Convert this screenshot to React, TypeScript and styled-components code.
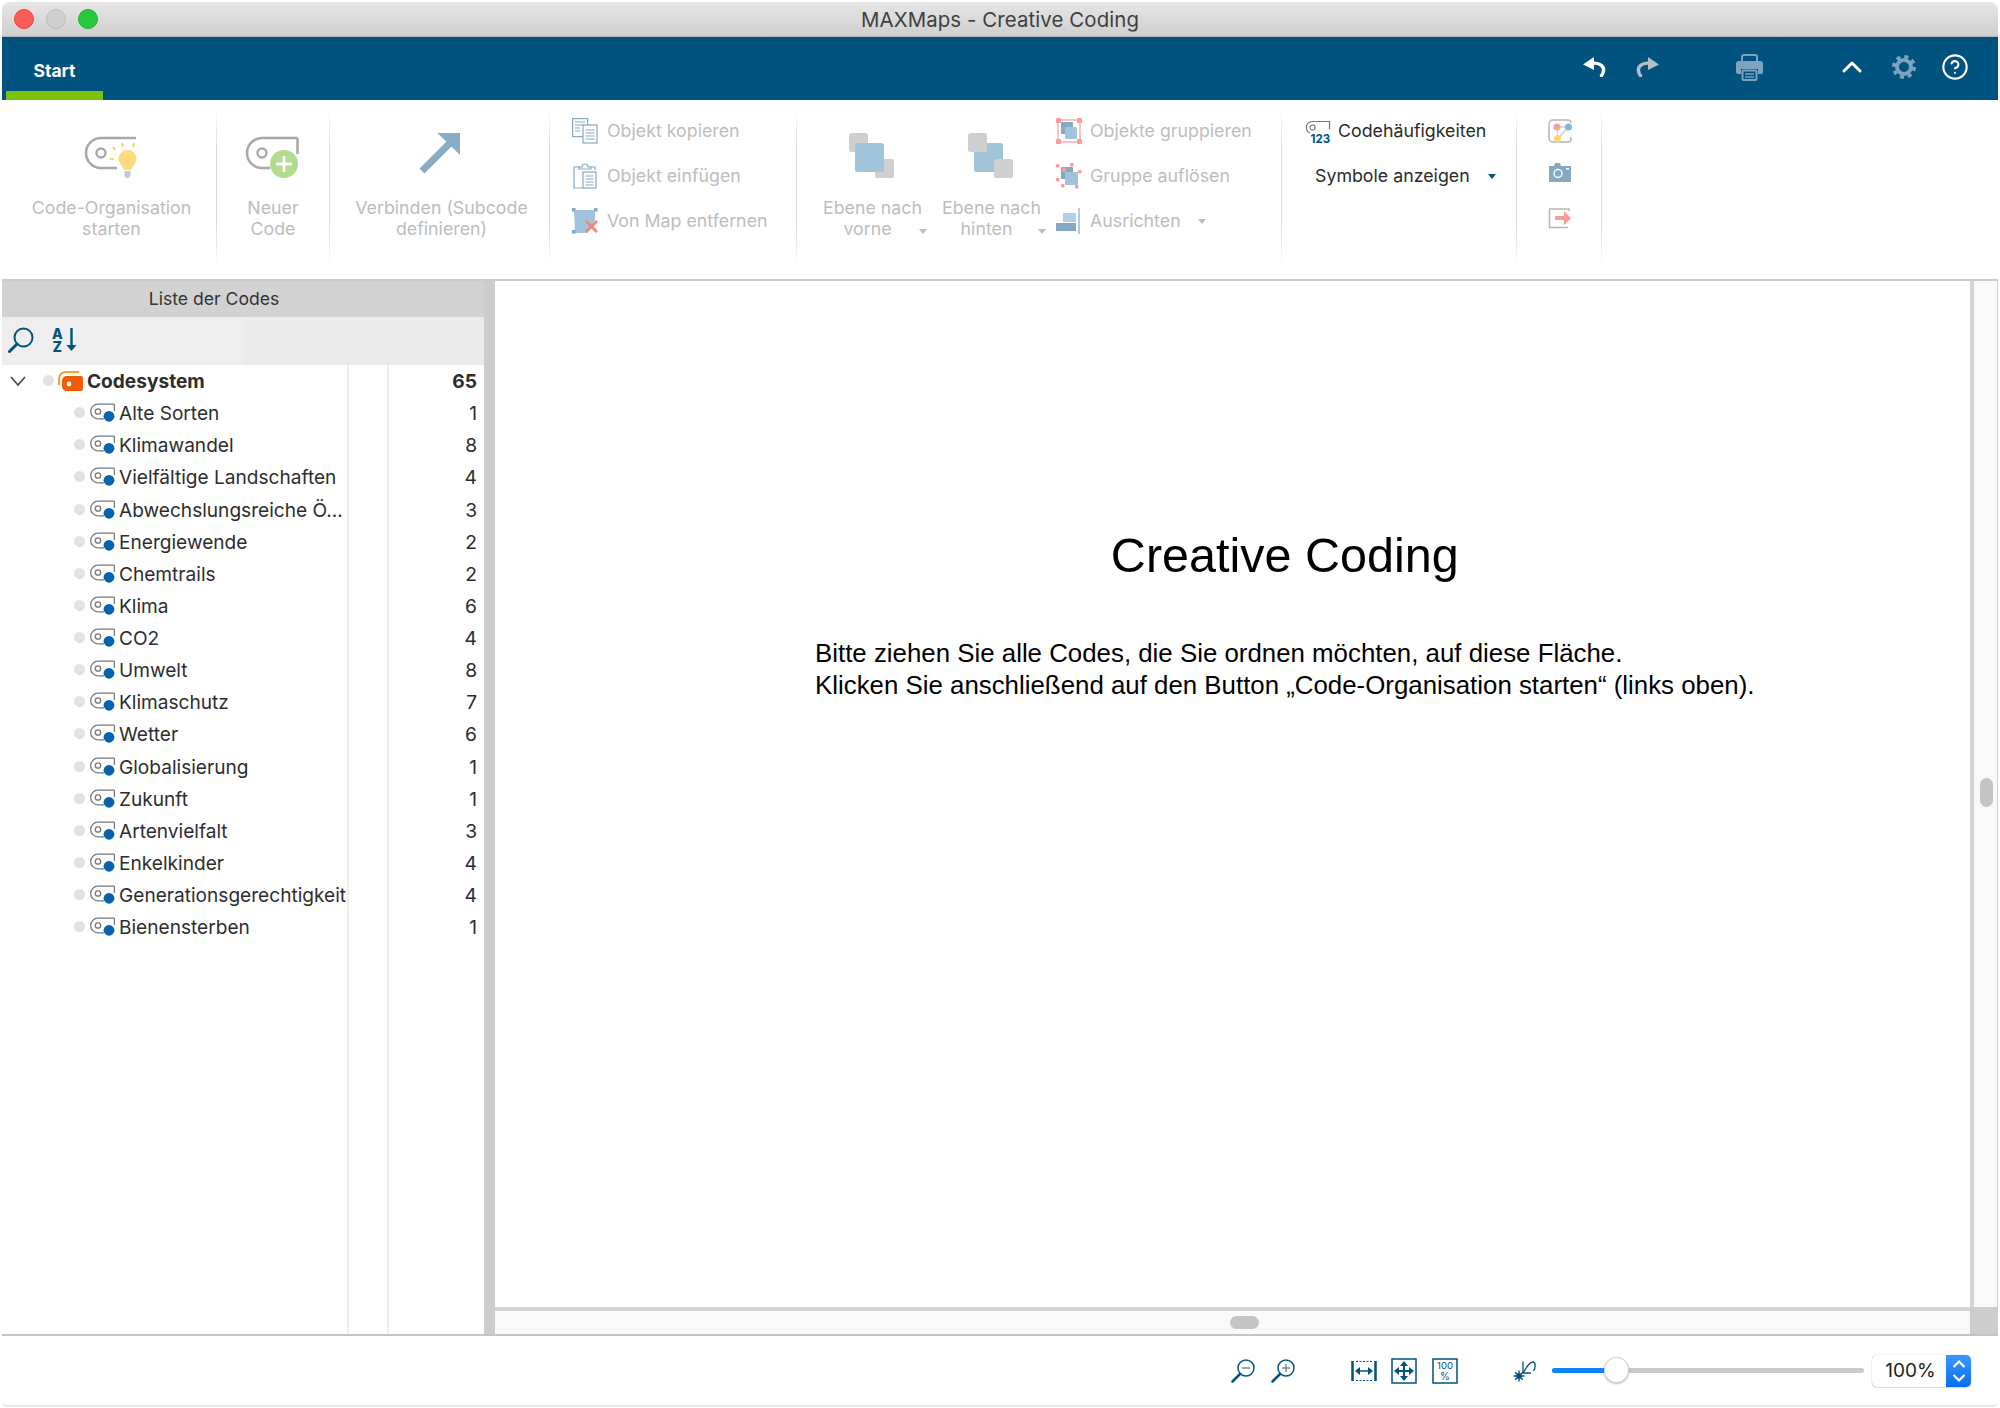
import React from 'react';
import styled, { createGlobalStyle } from 'styled-components';
import { CircleHelp, ChevronUp } from 'lucide-react';

const UI = `Inter, "Liberation Sans", sans-serif`;
const NAVY = '#01537f';

const Global = createGlobalStyle`
  html, body { margin: 0; padding: 0; background: #fff; }
  * { box-sizing: border-box; }
`;

const Page = styled.div`
  width: 2000px; height: 1408px; padding: 2px 2px 1px 2px; background: #fff;
  font-family: ${UI}; overflow: hidden;
`;
const Win = styled.div`
  height: 100%; display: flex; flex-direction: column; background: #fff;
  border-bottom: 2px solid #e6e6e6; border-radius: 8px 8px 6px 6px; overflow: hidden;
`;
const TitleBar = styled.div`
  height: 35px; flex: none; display: flex; align-items: center; justify-content: center; position: relative;
  background: linear-gradient(#e6e6e6, #cfcfcf); border-bottom: 1px solid #b4b4b4;
  font-size: 20.4px; color: #3f3f3f; letter-spacing: 0.1px;
`;
const Lights = styled.div`
  position: absolute; left: 12px; top: 7px; display: flex; gap: 12px;
`;
const Light = styled.span<{ $c: string; $b: string }>`
  width: 20px; height: 20px; border-radius: 50%; background: ${p => p.$c}; border: 1px solid ${p => p.$b};
`;
const Header = styled.div`
  height: 63px; flex: none; background: ${NAVY}; display: flex; align-items: stretch; padding-left: 4px; position: relative;
`;
const Tab = styled.div`
  width: 97px; display: flex; align-items: center; justify-content: center; padding-top: 12px;
  border-bottom: 9px solid #7cc207; color: #fff; font-weight: 700; font-size: 17.5px;
`;
const HeaderTools = styled.div`
  margin-left: auto; display: flex; align-items: center; padding-right: 29px; padding-bottom: 3px;
`;
const HIcon = styled.span<{ $ml: number }>`
  display: flex; margin-left: ${p => p.$ml}px;
`;

const Ribbon = styled.div`
  height: 181px; flex: none; display: flex; align-items: flex-start; padding-top: 7px;
  border-bottom: 2px solid #cbcbcb; background: #fff;
`;
const Group = styled.div<{ $w: number; $pl?: number }>`
  width: ${p => p.$w}px; height: 158px; flex: none; display: flex;
  padding-left: ${p => p.$pl ?? 0}px;
  border-right: 1px solid;
  border-image: linear-gradient(rgba(220,220,220,0), #dcdcdc 25%, #dcdcdc 75%, rgba(220,220,220,0)) 1;
`;
const Big = styled.div<{ $w?: number }>`
  ${p => (p.$w ? `width:${p.$w}px;` : 'flex:1;')}
  display: flex; flex-direction: column; align-items: center; position: relative; padding-top: 26px;
`;
const BigIcon = styled.svg`
  display: block; flex: none; margin-bottom: 8px;
`;
const BigLabel = styled.div`
  font-size: 17.8px; line-height: 21px; text-align: center; color: #bdbdbd; white-space: nowrap;
`;
const ShiftLine = styled.div`
  padding-right: 10px;
`;
const BigCaret = styled.span`
  position: absolute; left: 106px; top: 122px; width: 0; height: 0;
  border-left: 4.5px solid transparent; border-right: 4.5px solid transparent; border-top: 5px solid #bdbdbd;
`;
const List = styled.div<{ $pl: number }>`
  display: flex; flex-direction: column; padding-left: ${p => p.$pl}px; padding-top: 1px;
`;
const Item = styled.div<{ $dark?: boolean; $gap?: number }>`
  height: 45px; display: flex; align-items: center; gap: ${p => p.$gap ?? 9}px; white-space: nowrap;
  font-size: 17.8px; color: ${p => (p.$dark ? '#2b2b2b' : '#bdbdbd')};
`;
const Caret = styled.span<{ $c: string; $ml: number }>`
  width: 0; height: 0; margin-left: ${p => p.$ml}px; margin-top: 2px;
  border-left: 4.5px solid transparent; border-right: 4.5px solid transparent; border-top: 5px solid ${p => p.$c};
`;
const SymbolText = styled.span`
  margin-left: 11px;
`;
const IconCol = styled.div`
  display: flex; flex-direction: column; padding-left: 31px; padding-top: 2px;
`;
const IconRow = styled.div`
  height: 44px; display: flex; align-items: center;
`;

const Main = styled.div`
  flex: 1; min-height: 0; display: flex; border-bottom: 2px solid #c4c4c4;
`;
const Panel = styled.div`
  width: 482px; flex: none; display: flex; flex-direction: column;
`;
const PanelHead = styled.div`
  height: 36px; flex: none; background: #d2d2d2; display: flex; align-items: center; justify-content: center;
  font-size: 17.6px; color: #333; padding: 0 58px 2px 0;
`;
const PanelTools = styled.div`
  height: 48px; flex: none; background: linear-gradient(90deg, #eeeeee 0, #eeeeee 50%, #ebebeb 50%); display: flex; align-items: center; padding: 0 0 2px 6px; gap: 18px;
`;
const Columns = styled.div`
  flex: 1; display: flex; min-height: 0;
`;
const NameCol = styled.div`
  width: 347px; flex: none; border-right: 2px solid #eee;
`;
const MidCol = styled.div`
  width: 40px; flex: none; border-right: 2px solid #eee;
`;
const CountCol = styled.div`
  flex: 1; padding-right: 7px;
`;
const NameRow = styled.div<{ $root?: boolean }>`
  height: 32.125px; display: flex; align-items: center; white-space: nowrap; overflow: hidden;
  padding-left: ${p => (p.$root ? 8 : 72)}px;
  font-size: 19.1px; color: #2d2d2d; font-weight: ${p => (p.$root ? 700 : 400)};
`;
const CountRow = styled.div<{ $root?: boolean }>`
  height: 32.125px; display: flex; align-items: center; justify-content: flex-end;
  font-size: 19.2px; color: #2d2d2d; font-weight: ${p => (p.$root ? 700 : 400)};
`;
const Dot = styled.span`
  width: 11px; height: 11px; border-radius: 50%; background: #e2e2e2; flex: none; margin-bottom: 1px;
`;
const Chevron = styled.svg`
  flex: none; margin-right: 17px;
`;
const TagIcon = styled.svg`
  flex: none; margin-left: 5px; margin-right: 4px; margin-bottom: 1px;
`;
const RootIcon = styled.svg`
  flex: none; margin-left: 4px; margin-right: 4px; margin-bottom: 1px;
`;
const Splitter = styled.div`
  width: 11px; flex: none; background: #cdcdcd;
`;
const Stage = styled.div`
  flex: 1; min-width: 0; display: flex; flex-direction: column;
`;
const StageTop = styled.div`
  flex: 1; min-height: 0; display: flex;
`;
const CanvasArea = styled.div`
  flex: 1; min-width: 0; background: #fff; padding: 244px 0 0 320px; font-family: "Liberation Sans", Arial, sans-serif; color: #000;
`;
const Sheet = styled.div`
  width: fit-content;
`;
const Title = styled.h1`
  margin: 0; font-size: 48.5px; line-height: 60px; font-weight: 400; text-align: center;
`;
const Lead = styled.p`
  margin: 52px 0 0; font-size: 25.85px; line-height: 32px; white-space: nowrap;
`;
const VScroll = styled.div`
  width: 28px; flex: none; background: #f9f9f9; border-left: 4px solid #d4d4d4; border-right: 1px solid #cfcfcf; padding: 497px 0 0 6px;
`;
const VThumb = styled.div`
  width: 13px; height: 29px; border-radius: 7px; background: #c4c4c4;
`;
const HScroll = styled.div`
  height: 27px; flex: none; display: flex; background: #f9f9f9; border-top: 4px solid #d4d4d4;
`;
const HTrack = styled.div`
  flex: 1; padding: 5px 0 0 735px;
`;
const HThumb = styled.div`
  width: 29px; height: 13px; border-radius: 7px; background: #c4c4c4;
`;
const Corner = styled.div`
  width: 28px; flex: none; margin-top: -4px; background: #cdcdcd;
`;
const Status = styled.div`
  height: 69px; flex: none; display: flex; align-items: center; justify-content: flex-end; padding: 0 27px 0 0; background: #fff;
`;
const SIcon = styled.span<{ $ml: number }>`
  display: flex; margin-left: ${p => p.$ml}px;
`;
const Slider = styled.div`
  width: 312px; height: 5px; margin-left: 15px; border-radius: 3px; background: #cbcbcb; position: relative;
`;
const SliderFill = styled.div`
  height: 100%; border-radius: 3px; background: #0a84ff;
`;
const Thumb = styled.div`
  position: absolute; top: -11px; width: 25px; height: 26px; border-radius: 50%; background: #fff;
  border: 1px solid #d2d2d2; box-shadow: 0 1px 2px rgba(0,0,0,.25);
`;
const Stepper = styled.div`
  width: 99px; height: 32px; margin-left: 8px; display: flex; border-radius: 5px; background: #fff;
  box-shadow: 0 0 1px rgba(0,0,0,.4), 0 1px 1px rgba(0,0,0,.12); overflow: hidden;
`;
const StepVal = styled.div`
  flex: 1; display: flex; align-items: center; justify-content: center; font-size: 19px; color: #222; padding-left: 3px;
`;
const StepBtn = styled.div`
  width: 25px; flex: none; display: flex; align-items: center; justify-content: center;
  background: linear-gradient(#3b99fc, #0a6cf0);
`;

/* ---------- drawings ---------- */
const G = '#a9a9a9';
const B1 = '#a2c4da';
const B2 = '#86a9c3';
const R = '#f99';

const Tag = () => (
  <TagIcon width={25} height={19} viewBox="0 0 25 19">
    <path d="M24.5 1.2H8a7 7 0 0 0 0 14.6h6" fill="none" stroke="#777" strokeWidth="1.3" />
    <path d="M24.4 1.2V8" fill="none" stroke="#777" strokeWidth="1.3" />
    <circle cx="8" cy="8.5" r="2.7" fill="none" stroke="#777" strokeWidth="1.3" />
    <circle cx="19" cy="13.3" r="5.4" fill="#0863ad" />
  </TagIcon>
);
const Root = () => (
  <RootIcon width={25} height={20} viewBox="0 0 25 20">
    <path d="M21 1H8C3 1 1 4 1 9v5" fill="none" stroke="#f7a12e" strokeWidth="2" />
    <path d="M9 5h14a2 2 0 0 1 2 2v11a2 2 0 0 1-2 2H9c-3 0-5-2-5-5v-5c0-3 2-5 5-5z" fill="#f25c05" />
    <circle cx="11" cy="13" r="2.4" fill="#fff" />
  </RootIcon>
);
const Layers = ({ front }: { front: boolean }) => (
  <BigIcon width={60} height={56} viewBox="0 -3 60 56">
    {front ? (
      <>
        <rect x="6" y="-3" width="19" height="19" rx="2.5" fill="#cfcfcf" />
        <rect x="32" y="23" width="19" height="19" rx="2.5" fill="#cfcfcf" />
        <rect x="12" y="7" width="29" height="29" rx="2.5" fill={B1} />
      </>
    ) : (
      <>
        <rect x="12" y="7" width="29" height="29" rx="2.5" fill={B1} />
        <rect x="6" y="-3" width="19" height="19" rx="2.5" fill="#cfcfcf" />
        <rect x="32" y="23" width="19" height="19" rx="2.5" fill="#cfcfcf" />
      </>
    )}
  </BigIcon>
);

const Undo = ({ c, flip }: { c: string; flip?: boolean }) => (
  <svg width="23" height="20" viewBox="0 0 23 20" style={flip ? { transform: 'scaleX(-1)' } : undefined}>
    <path d="M8 6.500c7-1.500 13.500 2 12.500 7.500-.3 2-1 3.500-2 4.500" fill="none" stroke={c} strokeWidth="3.400" strokeLinecap="round" />
    <path d="M0 7.500 11 0v13z" fill={c} />
  </svg>
);
const Printer = () => (
  <svg width="27" height="27" viewBox="0 0 27 27">
    <path d="M6 8V3a2 2 0 0 1 2-2h11a2 2 0 0 1 2 2v5" fill="none" stroke="#7ea3bf" strokeWidth="2" />
    <path d="M3 7h21a3 3 0 0 1 3 3v8a2 2 0 0 1-2 2h-3v-5H5v5H2a2 2 0 0 1-2-2v-8a3 3 0 0 1 3-3z" fill="#7ea3bf" />
    <rect x="6.500" y="16.500" width="14" height="9.500" rx="1" fill="none" stroke="#7ea3bf" strokeWidth="2" />
    <path d="M9 20h9M9 23h9" stroke="#7ea3bf" strokeWidth="1.500" />
  </svg>
);
const Gear = () => (
  <svg width="24" height="24" viewBox="0 0 24 24">
    <circle cx="12" cy="12" r="7" fill="none" stroke="#7ea3bf" strokeWidth="4" />
    <circle cx="12" cy="12" r="10" fill="none" stroke="#7ea3bf" strokeWidth="4" strokeDasharray="3.9 3.95" />
  </svg>
);
const Search = ({ c, w = 26 }: { c: string; w?: number }) => (
  <svg width={w} height={w} viewBox="0 0 26 26">
    <circle cx="15.500" cy="10.500" r="9" fill="none" stroke={c} strokeWidth="2" />
    <path d="M9 17 1.500 24.500" stroke={c} strokeWidth="3" strokeLinecap="round" />
  </svg>
);
const Sort = () => (
  <svg width="26" height="30" viewBox="0 0 26 30">
    <text x="0" y="14" fontFamily="Inter, sans-serif" fontWeight="800" fontSize="14" fill={NAVY}>A</text>
    <text x="0.500" y="27" fontFamily="Inter, sans-serif" fontWeight="800" fontSize="14" fill={NAVY}>Z</text>
    <path d="M19.500 3v20" stroke={NAVY} strokeWidth="2.400" />
    <path d="M14.500 20h10l-5 6z" fill={NAVY} />
  </svg>
);
const CopyI = () => (
  <svg width="26" height="26" viewBox="0 0 26 26">
    <rect x="0.600" y="0.600" width="15" height="18" fill="#fff" stroke={B2} strokeWidth="1.200" />
    <path d="M3 4h10M3 7h10M3 10h5M3 13h5" stroke={B2} strokeWidth="1" />
    <rect x="11" y="7" width="14" height="18" fill="#fff" stroke={B2} strokeWidth="1.200" />
    <path d="M13.500 12h9M13.500 15h9M13.500 18h9M13.500 21h9" stroke={B2} strokeWidth="1" />
  </svg>
);
const PasteI = () => (
  <svg width="26" height="26" viewBox="0 0 26 26">
    <path d="M8 4H2v21h9" fill="none" stroke={B2} strokeWidth="1.200" />
    <path d="M18 4h5v3" fill="none" stroke={B2} strokeWidth="1.200" />
    <path d="M7 6V4h3a3 3 0 0 1 6 0h3v2z" fill="#fff" stroke={B2} strokeWidth="1.200" />
    <rect x="11" y="9" width="13" height="16" fill="#fff" stroke={B2} strokeWidth="1.200" />
    <path d="M13.500 13h8M13.500 16h8M13.500 19h8M13.500 22h8" stroke={B2} strokeWidth="1" />
  </svg>
);
const RemoveI = () => (
  <svg width="26" height="26" viewBox="0 0 26 26">
    <path d="M2 2h21v10l-8 13H3z" fill={B1} />
    <rect x="0" y="0" width="3.500" height="3.500" fill={B2} />
    <rect x="22" y="0" width="3.500" height="3.500" fill={B2} />
    <rect x="0" y="22" width="3.500" height="3.500" fill={B2} />
    <path d="M14 13 25 24M25 13 14 24" stroke="#f4877c" strokeWidth="3" />
  </svg>
);
const GroupI = () => (
  <svg width="26" height="26" viewBox="0 0 26 26">
    <rect x="2" y="2" width="22" height="22" fill="none" stroke={R} strokeWidth="1.200" />
    <rect x="5" y="4" width="12" height="12" rx="1" fill={B2} />
    <rect x="9" y="9" width="12" height="12" rx="1" fill={B1} />
    {[[0, 0], [21, 0], [0, 21], [21, 21]].map(([x, y]) => <rect key={`${x}-${y}`} x={x} y={y} width="5" height="5" rx="1" fill={R} />)}
  </svg>
);
const UngroupI = () => (
  <svg width="26" height="26" viewBox="0 0 26 26">
    <rect x="5" y="4" width="12" height="12" rx="1" fill={B2} />
    <rect x="9" y="9" width="13" height="13" rx="1" fill={B1} />
    <rect x="6" y="5" width="4" height="4" rx="1" fill={R} />
    {[[0, 1], [14, 0], [22, 7], [0, 15], [5, 21], [19, 22]].map(([x, y]) => <rect key={`${x}-${y}`} x={x} y={y} width="3.500" height="3.500" rx="1" fill={R} />)}
  </svg>
);
const AlignI = () => (
  <svg width="26" height="26" viewBox="0 0 26 26">
    <rect x="7" y="5" width="13" height="9" fill="#aed0e8" />
    <rect x="0" y="15" width="20" height="8" fill={B2} />
    <path d="M23 0v26" stroke={B2} strokeWidth="1.200" />
  </svg>
);
const FreqI = () => (
  <svg width="27" height="26" viewBox="0 0 27 26">
    <path d="M26 3.500H8a6 6 0 0 0-2 11.500" fill="none" stroke="#777" strokeWidth="1.200" />
    <path d="M25.500 3.500v8" stroke="#777" strokeWidth="1.200" />
    <circle cx="8.500" cy="9.500" r="2.500" fill="none" stroke="#777" strokeWidth="1.200" />
    <text x="6.500" y="24.500" fontFamily="Inter, sans-serif" fontWeight="700" fontSize="11.500" fill={NAVY}>123</text>
  </svg>
);
const ShareI = () => (
  <svg width="24" height="24" viewBox="0 0 24 24">
    <path d="M20 1H5a4 4 0 0 0-4 4v14a4 4 0 0 0 4 4h15a3 3 0 0 0 3-3v-2M23 4a3 3 0 0 0-3-3" fill="none" stroke="#b5b5b5" strokeWidth="1.500" />
    <path d="M9 8 21 8M9 8l.5 11.500M9.500 19.500 21 8" fill="none" stroke="#cfcfcf" strokeWidth="1.300" />
    <circle cx="9" cy="8" r="3.500" fill="#f8a0a0" />
    <circle cx="20.500" cy="8" r="3.500" fill="#86b4d6" />
    <circle cx="9.500" cy="19.500" r="3.500" fill="#fad66d" />
  </svg>
);
const CameraI = () => (
  <svg width="24" height="24" viewBox="0 0 24 24">
    <path d="M1 3h5l1-3h5l1 3h10v16H1z" fill="#86a9c3" />
    <circle cx="10" cy="10.500" r="4" fill="none" stroke="#fff" strokeWidth="1.400" />
    <rect x="18" y="5" width="3" height="1.600" fill="#fff" />
  </svg>
);
const ExportI = () => (
  <svg width="24" height="24" viewBox="0 0 24 24">
    <path d="M21 4V2H1.500v18.500H20" fill="none" stroke="#b5b5b5" strokeWidth="1.500" />
    <path d="M7 9h9V4l7 7.300-7 7v-5.300H7z" fill="#f99a96" />
  </svg>
);
const ZoomOut = ({ plus }: { plus?: boolean }) => (
  <svg width="25" height="24" viewBox="0 0 25 24">
    <circle cx="15" cy="9" r="8" fill="none" stroke={NAVY} strokeWidth="1.500" />
    <path d="M9 15 1.500 22.500" stroke={NAVY} strokeWidth="2.500" strokeLinecap="round" />
    <path d="M11 9h8" stroke="#6d8fa6" strokeWidth="1.500" />
    {plus && <path d="M15 5v8" stroke="#6d8fa6" strokeWidth="1.500" />}
  </svg>
);
const FitWidth = () => (
  <svg width="26" height="22" viewBox="0 0 26 22">
    <path d="M1.500 1v20M24.500 1v20" stroke={NAVY} strokeWidth="2.500" />
    <path d="M5 1.500h16M5 20.500h16" stroke={NAVY} strokeWidth="1" strokeDasharray="2 1.500" />
    <path d="M6 11h14" stroke={NAVY} strokeWidth="1.500" />
    <path d="M4 11l5-4v8zM22 11l-5-4v8z" fill={NAVY} />
  </svg>
);
const FitAll = () => (
  <svg width="26" height="26" viewBox="0 0 26 26">
    <rect x="1" y="1" width="24" height="24" fill="none" stroke={NAVY} strokeWidth="1.500" />
    <path d="M13 6v14M6 13h14" stroke={NAVY} strokeWidth="2" />
    <path d="M13 3l4 5H9zM13 23l4-5H9zM3 13l5-4v8zM23 13l-5-4v8z" fill={NAVY} />
  </svg>
);
const Fit100 = () => (
  <svg width="26" height="26" viewBox="0 0 26 26">
    <rect x="1" y="1" width="24" height="24" fill="none" stroke={NAVY} strokeWidth="1.500" />
    <text x="13" y="11" textAnchor="middle" fontFamily="Inter, sans-serif" fontSize="9.500" fill={NAVY} textLength="16" lengthAdjust="spacingAndGlyphs">100</text>
    <text x="13" y="22" textAnchor="middle" fontFamily="Inter, sans-serif" fontSize="10" fill={NAVY}>%</text>
  </svg>
);
const Spark = () => (
  <svg width="24" height="22" viewBox="0 0 24 22">
    <path d="M6 10.500v11M.5 16h11M2.200 12.200l7.600 7.600M9.800 12.200l-7.600 7.600" stroke={NAVY} strokeWidth="1.400" />
    <circle cx="6" cy="16" r="2.800" fill={NAVY} />
    <path d="M10 1.500v11.500h8" fill="none" stroke={NAVY} strokeWidth="1.300" />
    <path d="M10.500 12.500C13 8 16 2 20 2c2.500 0 3 5 .5 9" fill="none" stroke={NAVY} strokeWidth="1.300" />
  </svg>
);
const StepArrows = () => (
  <svg width="16" height="24" viewBox="0 0 16 24">
    <path d="M2.500 8 8 2.500 13.500 8M2.500 16 8 21.500 13.500 16" fill="none" stroke="#fff" strokeWidth="2.200" />
  </svg>
);

const ROWS: [string, number][] = [
  ['Alte Sorten', 1], ['Klimawandel', 8], ['Vielfältige Landschaften', 4], ['Abwechslungsreiche Ö...', 3],
  ['Energiewende', 2], ['Chemtrails', 2], ['Klima', 6], ['CO2', 4], ['Umwelt', 8], ['Klimaschutz', 7],
  ['Wetter', 6], ['Globalisierung', 1], ['Zukunft', 1], ['Artenvielfalt', 3], ['Enkelkinder', 4],
  ['Generationsgerechtigkeit', 4], ['Bienensterben', 1],
];

export default function App() {
  return (
    <Page>
      <Global />
      <Win>
        <TitleBar>
          <Lights>
            <Light $c="#fc5b57" $b="#e5453f" />
            <Light $c="#cfcfcf" $b="#bdbdbd" />
            <Light $c="#2ac83f" $b="#20b02f" />
          </Lights>
          MAXMaps - Creative Coding
        </TitleBar>
        <Header>
          <Tab>Start</Tab>
          <HeaderTools>
            <HIcon $ml={0}><Undo c="#fff" /></HIcon>
            <HIcon $ml={30}><Undo c="#b4bec6" flip /></HIcon>
            <HIcon $ml={77}><Printer /></HIcon>
            <HIcon $ml={73}><ChevronUp size={32} color="#fff" strokeWidth={2.200} /></HIcon>
            <HIcon $ml={24}><Gear /></HIcon>
            <HIcon $ml={25}><CircleHelp size={28} color="#fff" strokeWidth={1.800} /></HIcon>
          </HeaderTools>
        </Header>
        <Ribbon>
          <Group $w={215} $pl={5}>
            <Big>
              <BigIcon width={60} height={56} viewBox="0 0 60 56">
                <path d="M54 5H19a15 15 0 0 0 0 30h16" fill="none" stroke={G} strokeWidth="2.600" />
                <circle cx="19" cy="20" r="4.500" fill="none" stroke={G} strokeWidth="2.400" />
                <path d="M45.500 17a9 9 0 0 1 7 14.500c-2 2.500-3 4-3.500 5.500h-7c-.5-1.500-1.500-3-3.500-5.500a9 9 0 0 1 7-14.500z" fill="#ffd97e" />
                <path d="M42.500 38h6v5l-2 2h-2l-2-2z" fill="#c8c8c8" />
                <path d="M31 14l2 3M40 10l1 4M52 10l-1 4M28 26h4" stroke="#ffcf70" strokeWidth="2" />
              </BigIcon>
              <BigLabel>Code-Organisation<br />starten</BigLabel>
            </Big>
          </Group>
          <Group $w={113}>
            <Big>
              <BigIcon width={60} height={56} viewBox="0 0 60 56">
                <path d="M54.500 5H19a15 15 0 0 0 0 30h8" fill="none" stroke={G} strokeWidth="2.600" />
                <path d="M54.500 5v16" fill="none" stroke={G} strokeWidth="2.600" />
                <circle cx="19" cy="20" r="4.500" fill="none" stroke={G} strokeWidth="2.400" />
                <circle cx="41" cy="31" r="14" fill="#b1dc8d" />
                <path d="M41 23v16M33 31h16" stroke="#fff" strokeWidth="2.800" />
              </BigIcon>
              <BigLabel>Neuer<br />Code</BigLabel>
            </Big>
          </Group>
          <Group $w={220} $pl={4}>
            <Big>
              <BigIcon width={60} height={56} viewBox="0 0 60 56">
                <path d="M10 38 38 10" stroke="#8aabc4" strokeWidth="7" />
                <path d="M25.500 0H48v22z" fill="#8aabc4" />
              </BigIcon>
              <BigLabel>Verbinden (Subcode<br />definieren)</BigLabel>
            </Big>
          </Group>
          <Group $w={247}>
            <List $pl={22}>
              <Item><CopyI />Objekt kopieren</Item>
              <Item><PasteI />Objekt einfügen</Item>
              <Item><RemoveI />Von Map entfernen</Item>
            </List>
          </Group>
          <Group $w={485} $pl={16}>
            <Big $w={119}>
              <Layers front />
              <BigLabel>Ebene nach<ShiftLine>vorne</ShiftLine></BigLabel>
              <BigCaret />
            </Big>
            <Big $w={119}>
              <Layers front={false} />
              <BigLabel>Ebene nach<ShiftLine>hinten</ShiftLine></BigLabel>
              <BigCaret />
            </Big>
            <List $pl={5}>
              <Item $gap={8}><GroupI />Objekte gruppieren</Item>
              <Item $gap={8}><UngroupI />Gruppe auflösen</Item>
              <Item $gap={8}><AlignI />Ausrichten<Caret $c="#bdbdbd" $ml={9} /></Item>
            </List>
          </Group>
          <Group $w={235}>
            <List $pl={22}>
              <Item $dark $gap={7}><FreqI />Codehäufigkeiten</Item>
              <Item $dark $gap={0}><SymbolText>Symbole anzeigen</SymbolText><Caret $c={NAVY} $ml={18} /></Item>
            </List>
          </Group>
          <Group $w={85}>
            <IconCol>
              <IconRow><ShareI /></IconRow>
              <IconRow><CameraI /></IconRow>
              <IconRow><ExportI /></IconRow>
            </IconCol>
          </Group>
        </Ribbon>
        <Main>
          <Panel>
            <PanelHead>Liste der Codes</PanelHead>
            <PanelTools>
              <Search c={NAVY} />
              <Sort />
            </PanelTools>
            <Columns>
              <NameCol>
                <NameRow $root>
                  <Chevron width="16" height="11" viewBox="0 0 16 11"><path d="M1 1l7 8 7-8" fill="none" stroke="#444" strokeWidth="1.600" /></Chevron>
                  <Dot />
                  <Root />
                  Codesystem
                </NameRow>
                {ROWS.map(([name]) => (
                  <NameRow key={name}><Dot /><Tag />{name}</NameRow>
                ))}
              </NameCol>
              <MidCol />
              <CountCol>
                <CountRow $root>65</CountRow>
                {ROWS.map(([name, n]) => <CountRow key={name}>{n}</CountRow>)}
              </CountCol>
            </Columns>
          </Panel>
          <Splitter />
          <Stage>
            <StageTop>
              <CanvasArea>
                <Sheet>
                  <Title>Creative Coding</Title>
                  <Lead>
                    Bitte ziehen Sie alle Codes, die Sie ordnen möchten, auf diese Fläche.<br />
                    Klicken Sie anschließend auf den Button „Code-Organisation starten“ (links oben).
                  </Lead>
                </Sheet>
              </CanvasArea>
              <VScroll><VThumb /></VScroll>
            </StageTop>
            <HScroll>
              <HTrack><HThumb /></HTrack>
              <Corner />
            </HScroll>
          </Stage>
        </Main>
        <Status>
          <SIcon $ml={0}><ZoomOut /></SIcon>
          <SIcon $ml={15}><ZoomOut plus /></SIcon>
          <SIcon $ml={55}><FitWidth /></SIcon>
          <SIcon $ml={14}><FitAll /></SIcon>
          <SIcon $ml={15}><Fit100 /></SIcon>
          <SIcon $ml={55}><Spark /></SIcon>
          <Slider>
            <SliderFill style={{ width: 60 }} />
            <Thumb style={{ left: 52 }} />
          </Slider>
          <Stepper>
            <StepVal>100%</StepVal>
            <StepBtn><StepArrows /></StepBtn>
          </Stepper>
        </Status>
      </Win>
    </Page>
  );
}
